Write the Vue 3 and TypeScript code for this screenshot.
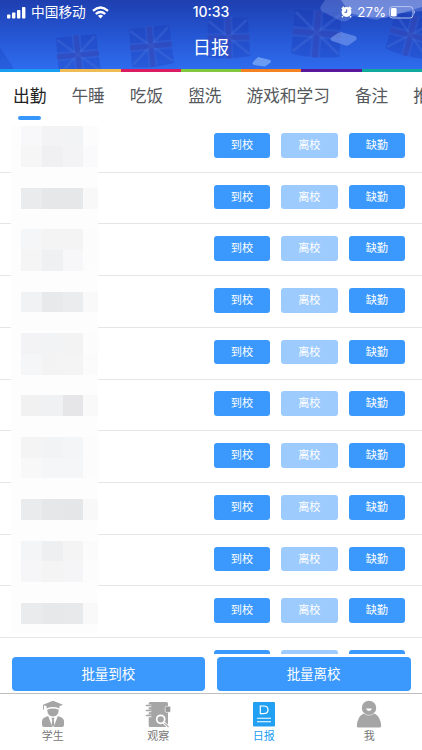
<script setup lang="ts">
import { ref } from 'vue'

const tabs = ['出勤', '午睡', '吃饭', '盥洗', '游戏和学习', '备注', '推送']
const activeTab = ref(0)
const stripes = ['#189ff2', '#f0bd55', '#dc1c62', '#80c83d', '#f58220', '#5a189a', '#10a99b']
const rows = Array.from({ length: 11 }, (_, i) => i)

const e = '#fdfdfd'
const mosaic: string[][] = [
  ['#f8f8fa', '#f3f3f5', '#f2f3f5', '#fcfcfd'],
  ['#f6f6f6', '#f0f0f2', '#f3f3f5', '#fafafc'],
  [e, e, e, e],
  ['#eaebed', '#e6e7e9', '#e6e7e8', '#f8f8f9'],
  [e, e, e, e],
  ['#f5f6f8', '#f4f4f5', '#f4f4f5', '#fcfcfc'],
  ['#f5f5f5', '#eef0f1', '#f7f7f9', '#fcfcfc'],
  [e, e, e, e],
  ['#f1f2f4', '#e7e9ea', '#ebecee', '#f9f9f9'],
  [e, e, e, e],
  ['#f3f3f5', '#f2f3f5', '#f3f3f4', '#fcfcfc'],
  ['#f5f6f8', '#f3f3f3', '#f4f4f5', '#fbfbfb'],
  [e, e, e, e],
  ['#f1f1f2', '#f0f1f3', '#e6e6e8', '#f9f9f9'],
  [e, e, e, e],
  ['#f4f4f5', '#f2f3f5', '#f4f5f7', '#fcfcfc'],
  ['#f8f8f9', '#f5f6f8', '#f5f6f7', '#fcfcfd'],
  [e, e, e, e],
  ['#eaebed', '#e6e7e9', '#e5e6e7', '#f8f8f8'],
  [e, e, e, e],
  ['#f4f5f7', '#eeeff1', '#f4f4f4', '#fbfbfb'],
  ['#f6f6f8', '#f4f4f5', '#f5f5f7', '#fcfcfc'],
  [e, e, e, e],
  ['#eaebed', '#e6e8ea', '#e7e9ea', '#f9f9f9'],
]
const cellWidths = [20.8, 20.8, 20.8, 15]

const nav = [
  { id: 'student', label: '学生' },
  { id: 'observe', label: '观察' },
  { id: 'daily', label: '日报' },
  { id: 'me', label: '我' },
]
const activeNav = ref('daily')
</script>

<template>
  <div class="screen">
    <header class="header">
      <svg class="art" viewBox="0 0 422 69" preserveAspectRatio="none">
        <defs>
          <g id="flag">
            <path d="M0 4 Q20 2 40 0 L45 38 Q22 44 3 42 Z" fill="#1936b0" opacity=".3" />
            <path d="M1 6 L44 36 M39 2 L4 40" stroke="#5b86e6" stroke-width="2.6" opacity=".22" />
            <path d="M20 1 L24 42 M1 23 L43 19" stroke="#527be0" stroke-width="9" opacity=".2" />
            <path d="M20 1 L24 42 M1 23 L43 19" stroke="#3536a4" stroke-width="5" opacity=".32" />
          </g>
        </defs>
        <use href="#flag" x="56" y="34" />
        <use href="#flag" x="129" y="25" />
        <use href="#flag" transform="translate(208 15) rotate(4)" />
        <use href="#flag" transform="translate(296 5) rotate(10) scale(1.15)" />
        <use href="#flag" transform="translate(397 8) rotate(20)" />
        <path d="M0 47 L14 69 H0Z" fill="#1b3fba" opacity=".3" />
        <path d="M325 0 H422 V11 L391 14 L377 20 L353 16 Q348 23 341 21 L323 12 Q319 9 321 6Z" fill="#a9bdfa" opacity=".26" />
        <path d="M341 0 H422 V7 L385 18 L366 17 L350 13Z" fill="#c4cffc" opacity=".36" />
        <path d="M341 32 L355 36 Q358 38 356 40 L349 45 Q347 46 344 45 L332 41 Q329 39 332 37 L338 33Z" fill="#8caef5" opacity=".5" />
        <path d="M258 57 L270 60 Q272 61 270 63 L265 66.5 L254 65 Q252 64 253 62Z" fill="#8eb8fa" opacity=".65" />
      </svg>
      <div class="status">
        <div class="status-left">
          <svg class="signal" width="19" height="13" viewBox="0 0 19 13" fill="#fff">
            <rect x="0" y="8.5" width="3.4" height="4" rx=".8" />
            <rect x="5" y="6.5" width="3.4" height="6" rx=".8" />
            <rect x="10" y="4" width="3.4" height="8.5" rx=".8" />
            <rect x="15" y="1" width="3.4" height="11.5" rx=".8" />
          </svg>
          <span class="carrier">中国移动</span>
          <svg class="wifi" width="17" height="13" viewBox="0 0 17 13" fill="none" stroke="#fff" stroke-width="2.3">
            <path d="M1 4.8 Q8.5 -1.8 16 4.8" />
            <path d="M3.8 8 Q8.5 3.9 13.2 8" />
            <path d="M5.9 9.8 Q8.5 7.6 11.1 9.8 L8.5 12.5Z" fill="#fff" stroke="none" />
          </svg>
        </div>
        <span class="clock">10:33</span>
        <div class="status-right">
          <svg width="11" height="12" viewBox="0 0 11 12">
            <circle cx="5.5" cy="6" r="4.9" fill="#fff" />
            <path d="M.8 3 L3 .9 M8 .9 L10.2 3 M2 10.2 L1 11.3 M9 10.2 L10 11.3" stroke="#fff" stroke-width="1.6" />
            <path d="M5.7 3.4 V6.3 H3.5" fill="none" stroke="#2448b8" stroke-width=".9" />
          </svg>
          <span class="percent">27%</span>
          <svg width="27" height="13" viewBox="0 0 27 13">
            <rect x=".6" y=".6" width="23.4" height="11.4" rx="3" fill="none" stroke="#b7c5ef" stroke-width="1" />
            <rect x="2" y="2" width="5.6" height="8.6" rx="1.4" fill="#fff" />
            <path d="M25.1 4.3 Q27 6.2 25.1 8.3Z" fill="#b7c5ef" />
          </svg>
        </div>
      </div>
      <h1 class="title">日报</h1>
    </header>
    <div class="stripes">
      <i v-for="c in stripes" :key="c" :style="{ background: c }"></i>
    </div>

    <nav class="tabs">
      <button v-for="(t, i) in tabs" :key="t" class="tab" :class="{ active: i === activeTab }" @click="activeTab = i">
        {{ t }}
      </button>
    </nav>

    <main class="list">
      <div v-for="r in rows" :key="r" class="row">
        <button class="act">到校</button>
        <button class="act dim">离校</button>
        <button class="act">缺勤</button>
      </div>
      <div class="mosaic">
        <div v-for="(line, y) in mosaic" :key="y" class="line">
          <i v-for="(c, x) in line" :key="x" :style="{ background: c, width: cellWidths[x] + 'px' }"></i>
        </div>
      </div>
    </main>

    <div class="batch">
      <button>批量到校</button>
      <button>批量离校</button>
    </div>

    <footer class="bottom">
      <button v-for="n in nav" :key="n.id" class="nav" :class="{ active: n.id === activeNav }" @click="activeNav = n.id">
        <svg v-if="n.id === 'student'" width="26" height="28" viewBox="0 0 26 28" fill="#a5a5a5">
          <path d="M13 .8 L23 4.7 L19.4 6.3 V8.4 Q13 5.8 6.6 8.4 V6.3 L4 5.2 V9.5 H3 V4.7Z" />
          <path d="M7.2 9.7 Q13 7.2 18.8 9.7 Q18.4 16.2 13 16.6 Q7.6 16.2 7.2 9.7Z" />
          <path d="M8.2 16 L12.3 26.9 H4 Q2 26.9 2 24.7 V21 Q2.2 17.5 8.2 16Z" />
          <path d="M17.8 16 L13.7 26.9 H22 Q24 26.9 24 24.7 V21 Q23.8 17.5 17.8 16Z" />
          <path d="M11.4 17.8 H14.6 L13.8 20 L14.4 25 L13 27 L11.6 25 L12.2 20Z" />
        </svg>
        <svg v-else-if="n.id === 'observe'" width="26" height="28" viewBox="0 0 26 28">
          <rect x="3.7" y="2" width="19.3" height="25" rx="1.5" fill="#a5a5a5" />
          <path d="M2.8 5.9 H6.2 M2.8 10.9 H6.2 M2.8 15.9 H6.2" stroke="#fff" stroke-width="2.8" />
          <path d="M1.4 5.5 H5.6 M1.4 10.5 H5.6 M1.4 15.5 H5.6" stroke="#a5a5a5" stroke-width="1.6" stroke-linecap="round" />
          <rect x="20.2" y="6.3" width="5.4" height="6" rx="1" fill="#999" stroke="#fff" stroke-width=".6" />
          <circle cx="15.7" cy="19.3" r="4" fill="#a5a5a5" stroke="#fff" stroke-width="1.7" />
          <path d="M18.7 22.4 L23.6 27.2" stroke="#fff" stroke-width="2.8" />
          <path d="M19.5 23.2 L23.6 27.2" stroke="#a5a5a5" stroke-width="1.1" />
        </svg>
        <svg v-else-if="n.id === 'daily'" width="26" height="28" viewBox="0 0 26 28">
          <rect x="2" y="2" width="22" height="24.5" rx="1.2" fill="#22a0f4" />
          <path d="M9.3 6 H12.6 Q17 6 17 9.8 Q17 13.7 12.6 13.7 H9.3Z" fill="none" stroke="#fff" stroke-width="1.2" />
          <path d="M6 18.2 H20 M6 21.8 H20" stroke="#fff" stroke-width="1.1" />
        </svg>
        <svg v-else width="26" height="28" viewBox="0 0 26 28" fill="#a5a5a5">
          <path d="M7.5 13.6 Q1.3 17 .8 26 Q.8 27.4 2.2 27.4 H23.8 Q25.2 27.4 25.2 26 Q24.7 17 18.5 13.6Z" />
          <circle cx="13" cy="7.9" r="7.2" />
          <path d="M6.8 12.2 Q9.6 15.4 13 15.4 Q16.4 15.4 19.2 12.2" fill="none" stroke="#fff" stroke-width=".5" />
          <path d="M10 8.6 H16 Q15.4 10.9 13 10.9 Q10.6 10.9 10 8.6Z" fill="#fff" />
        </svg>
        <span>{{ n.label }}</span>
      </button>
    </footer>
  </div>
</template>

<style>
body {
  margin: 0;
  overflow: hidden;
}
</style>

<style scoped>
* {
  box-sizing: border-box;
}
.screen {
  width: 422px;
  height: 750px;
  display: flex;
  flex-direction: column;
  overflow: hidden;
  background: #fff;
  font-family: Roboto, 'Noto Sans CJK SC', sans-serif;
}
button {
  border: 0;
  padding: 0;
  margin: 0;
  background: none;
  font-family: inherit;
}
.header {
  position: relative;
  height: 69px;
  flex: none;
  background: linear-gradient(#1e3fb0, #2453cf 45%, #2e6cee);
  color: #fff;
}
.art {
  position: absolute;
  inset: 0;
  width: 422px;
  height: 69px;
}
.status {
  position: relative;
  display: grid;
  grid-template-columns: 1fr auto 1fr;
  align-items: center;
  height: 24px;
  padding: 0 7px;
}
.status-left,
.status-right {
  display: flex;
  align-items: center;
}
.status-right {
  justify-content: flex-end;
}
.status-right svg:last-child {
  margin-right: -1px;
}
.carrier {
  font-size: 13.7px;
  line-height: 20px;
  margin: 0 6px 0 5px;
}
.clock {
  font: 500 14px/20px Inter, sans-serif;
}
.percent {
  font: 400 13.3px/20px Inter, sans-serif;
  margin: 0 3px 0 5px;
}
.title {
  position: relative;
  margin: 10px 0 0;
  text-align: center;
  font-size: 18.3px;
  font-weight: 400;
  line-height: 28px;
}
.stripes {
  display: flex;
  height: 3px;
  flex: none;
}
.stripes i {
  flex: 1;
}
.tabs {
  display: flex;
  gap: 25px;
  height: 49px;
  flex: none;
  padding-left: 13px;
  overflow: hidden;
}
.tab {
  display: flex;
  flex-direction: column;
  align-items: center;
  flex: none;
  padding-top: 13px;
  font-size: 16.7px;
  line-height: 24px;
  color: #55585c;
  white-space: nowrap;
}
.tab.active {
  color: #222;
}
.tab.active::after {
  content: '';
  width: 23px;
  height: 3.5px;
  margin-top: 7px;
  border-radius: 2px;
  background: #3897fa;
}
.list {
  position: relative;
  height: 533px;
  flex: none;
  overflow: hidden;
}
.row {
  display: flex;
  justify-content: flex-end;
  gap: 11.2px;
  height: 51.72px;
  padding: 11.9px 17px 0 0;
  border-bottom: 1px solid #e6e6e7;
}
.act {
  width: 56.3px;
  height: 24.7px;
  border-radius: 3px;
  background: #3b99fd;
  color: #fff;
  font-size: 11.2px;
  line-height: 25px;
}
.act.dim {
  background: #9dcbfe;
}
.mosaic {
  position: absolute;
  left: 11px;
  top: 4.7px;
  width: 87.4px;
  padding: 0 0 9px 10px;
  background: #fdfdfd;
}
.line {
  display: flex;
  height: 20.75px;
}
.line i {
  flex: none;
}
.batch {
  display: flex;
  gap: 11.5px;
  height: 39px;
  flex: none;
  padding: 3px 11.5px 2px;
}
.batch button {
  flex: 1;
  border-radius: 4px;
  background: #3b99fd;
  color: #fff;
  font-size: 13.5px;
  line-height: 33px;
}
.bottom {
  display: flex;
  flex: 1;
  border-top: 1px solid #bfbfc1;
}
.nav {
  flex: 1;
  display: flex;
  flex-direction: column;
  align-items: center;
  padding-top: 6px;
  font-size: 11px;
  line-height: 18px;
  color: #777;
}
.nav svg {
  flex: none;
}
.nav.active {
  color: #22a0f4;
}
</style>
